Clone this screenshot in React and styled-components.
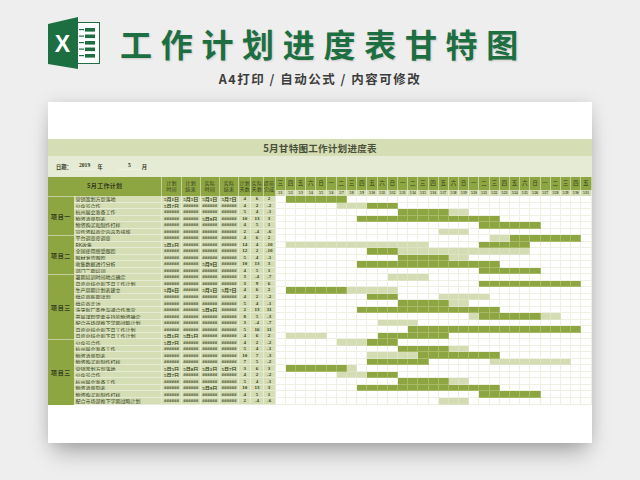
import React from 'react';
import styled, { createGlobalStyle } from 'styled-components';

const GlobalStyle = createGlobalStyle`
  html, body {
    margin: 0;
    padding: 0;
    background: #eeeeee;
  }
`;

const Page = styled.div`
  width: 640px;
  height: 480px;
  overflow: hidden;
  background: #eeeeee;
  font-family: "Liberation Sans", "Noto Sans CJK SC", sans-serif;
`;

const Header = styled.header`
  display: flex;
  align-items: center;
  height: 52px;
  padding: 17px 0 0 48px;
`;

const Title = styled.h1`
  margin: 0 0 0 20px;
  font-family: "Noto Sans CJK SC", sans-serif;
  font-size: 32px;
  line-height: 40px;
  font-weight: 700;
  letter-spacing: 8.7px;
  white-space: nowrap;
  color: #1d6f42;
  text-shadow: 1px 1px 2px rgba(0, 0, 0, 0.15);
`;

const Subtitle = styled.div`
  margin-top: 2px;
  height: 16px;
  line-height: 16px;
  text-align: center;
  font-family: "Noto Sans CJK SC", sans-serif;
  font-size: 12.5px;
  font-weight: 700;
  letter-spacing: 1.5px;
  color: #3d3d3d;
`;

const Card = styled.main`
  margin: 15px 48px 0;
  height: 341px;
  padding-top: 37px;
  box-sizing: border-box;
  background: #fff;
  box-shadow: 0 14px 22px -6px rgba(0, 0, 0, 0.3), 0 0 14px rgba(0, 0, 0, 0.1);
`;

const SheetTitle = styled.div`
  height: 17px;
  line-height: 18px;
  text-align: center;
  background: #d5ddb5;
  font-family: "Noto Sans CJK SC", sans-serif;
  font-size: 9.6px;
  font-weight: 700;
  letter-spacing: 0.2px;
  color: #4b5038;
`;

const DateBar = styled.div`
  display: flex;
  align-items: center;
  height: 20.5px;
  padding-left: 8px;
  box-sizing: border-box;
  background: #e6ebd6;
  font-family: "Noto Sans CJK SC", serif;
  font-size: 5.2px;
  font-weight: 700;
  color: #2f3520;
`;

const DateValue = styled.span`
  width: ${(props) => props.$w}px;
  margin-left: ${(props) => props.$ml}px;
  padding-bottom: 1px;
  text-align: center;
  border-bottom: 1px solid #eef1e2;
  font-family: "Liberation Serif", "Noto Sans CJK SC", serif;
  font-size: 5.6px;
`;

const DateUnit = styled.span`
  margin-left: 1px;
`;

const Sheet = styled.div`
  display: grid;
  grid-template-columns: 26px 88.4px repeat(4, 19.2px) repeat(3, 12.2px) repeat(31, 10.2px);
  grid-template-rows: 13.5px 6px repeat(32, 6.53px);
  font-family: "Liberation Serif", "Noto Sans CJK SC", serif;
  font-weight: 700;
  color: #353d20;
`;

const Cell = styled.div`
  display: flex;
  align-items: center;
  justify-content: center;
  min-width: 0;
  min-height: 0;
  overflow: hidden;
  box-sizing: border-box;
  white-space: nowrap;
`;

const HeadCell = styled(Cell)`
  grid-row: span 2;
  grid-column: span ${(props) => props.$cols || 1};
  background: #8ea642;
  border-right: 1px solid #c3d09a;
  font-family: "Noto Sans CJK SC", serif;
  font-size: ${(props) => props.$size || 5}px;
  font-weight: ${(props) => props.$weight || 400};
  line-height: 6.4px;
  text-align: center;
  letter-spacing: 0.3px;
`;

const WeekCell = styled(Cell)`
  background: #8ea642;
  border-right: 1px solid #c3d09a;
  font-family: "Noto Sans CJK SC", serif;
  font-size: 5.6px;
  font-weight: 400;
`;

const DayCell = styled(Cell)`
  background: #d5ddb5;
  border-right: 1px solid #e6ebd6;
  font-size: 3.3px;
`;

const GroupCell = styled(Cell)`
  grid-row: span ${(props) => props.$rows};
  background: #8ea642;
  border-top: 1px solid #c3d09a;
  font-family: "Noto Sans CJK SC", serif;
  font-size: 6px;
  letter-spacing: 0.6px;
`;

const TaskCell = styled(Cell)`
  justify-content: flex-start;
  padding-left: 1.6px;
  background: #d4ddb4;
  border-right: 1px solid #e6ebd6;
  border-bottom: 1px solid #e6ebd6;
  font-family: "Noto Sans CJK SC", serif;
  font-size: 5px;
  font-weight: 400;
`;

const DataCell = styled(Cell)`
  background: #d4ddb4;
  border-right: 1px solid #e6ebd6;
  border-bottom: 1px solid #e6ebd6;
  font-size: 5px;
`;

const fills = { dark: '#8ea642', light: '#d3dcb2' };
const lines = { dark: '#a6ba68', light: '#dce3c3' };

const GanttCell = styled.div`
  box-sizing: border-box;
  min-height: 0;
  background: ${(props) => fills[props.$fill] || '#fff'};
  border-right: 1px solid ${(props) => lines[props.$fill] || '#eef1e2'};
  border-bottom: 1px solid ${(props) => lines[props.$fill] || '#eef1e2'};
`;

const ExcelIcon = () => (
  <svg width="52" height="52" viewBox="0 0 52 52">
    <rect x="29" y="5.5" width="22.5" height="41" fill="#fff" stroke="#1d6f42" strokeWidth="1" />
    {[11, 17.5, 24, 30.5, 37].map((y) => (
      <g key={y} fill="#1d6f42">
        <rect x="37" y={y} width="10" height="3.6" />
        <rect x="31" y={y + 1} width="5" height="1.2" />
      </g>
    ))}
    <polygon points="0,7 30,0 30,52 0,47" fill="#1d6f42" />
    <text x="14.5" y="34.7" textAnchor="middle" fontFamily="Liberation Sans" fontWeight="700" fontSize="23" fill="#fff">
      X
    </text>
  </svg>
);

const weekNames = ['三', '四', '五', '六', '日', '一', '二'];
const days = Array.from({ length: 31 }, (_, i) => i);

const groups = [
  { name: '项目一', rows: 6 },
  { name: '项目二', rows: 6 },
  { name: '项目三', rows: 10 },
  { name: '项目三', rows: 10 },
];

const a = '5月1日';
const b = '5月5日';
const c = '5月7日';
const d = '5月9日';
const e = '5月6日';
const f = '5月8日';
const x = '######';

// task, plan start/end, real start/end, plan days, real days, diff, bars
const rows = [
  ['营销策划方案落地', a, b, a, c, 4, 6, 2, [['dark', 1, 6]]],
  ['公众号合作', c, x, x, x, 4, 2, -2, [['light', 6, 8], ['dark', 9, 11]]],
  ['杭州展会准备工作', x, x, x, x, 5, 4, -1, [['dark', 12, 16], ['light', 17, 18]]],
  ['物资清单列表', x, x, d, x, 10, 13, 3, [['dark', 8, 21]]],
  ['物资购买和制作打样', x, x, x, x, 4, 5, 1, [['dark', 20, 25]]],
  ['宣传资料商定内容及排版', x, x, x, x, 2, -4, -6, [['light', 16, 18]]],
  ['平台调查度调查', x, x, x, x, 4, 6, 2, [['light', 21, 22], ['dark', 23, 29]]],
  ['RK收集', a, x, x, x, 14, 4, -10, [['light', 1, 14], ['dark', 20, 24]]],
  ['全国使用感受跟踪', x, x, x, x, 12, 2, -10, [['dark', 9, 11], ['light', 12, 24]]],
  ['眼材发货跟踪', x, x, x, x, 5, 4, -1, [['dark', 12, 16], ['light', 17, 18]]],
  ['收集数据进行分析', x, x, d, x, 10, 13, 3, [['dark', 8, 21]]],
  ['部门二期培训', x, x, x, x, 4, 5, 1, [['dark', 20, 25]]],
  ['暑期培训时间地点确定', x, x, x, x, 3, -4, -7, [['light', 11, 14]]],
  ['月度总结会和下月工作计划', x, x, x, x, 3, 9, 6, [['dark', 20, 29]]],
  ['生产周期计划表建立', e, x, a, c, 4, 6, 2, [['dark', 1, 6], ['light', 7, 11]]],
  ['供应商账期谈判', x, x, x, x, 4, 2, -2, [['dark', 9, 11], ['light', 16, 20]]],
  ['供应商走访', x, x, x, x, 5, 4, -1, [['dark', 12, 16], ['light', 17, 18]]],
  ['洗牙新厂条件沟通合作事宜', x, x, d, x, 2, 13, 11, [['dark', 8, 21]]],
  ['开展课程需要支持的物资确定', x, x, x, x, 8, 5, -3, [['light', 19, 19], ['dark', 20, 25], ['light', 26, 27]]],
  ['配合市场部推下学期战略计划', x, x, x, x, 3, -4, -7, [['light', 10, 13]]],
  ['月度总结会和下月工作计划', x, x, x, x, 5, 16, 11, [['dark', 13, 29]]],
  ['月度总结会和下月工作计划', a, b, x, x, 4, 6, 2, [['light', 1, 4], ['dark', 10, 16]]],
  ['公众号合作', c, x, x, x, 4, 2, -2, [['light', 6, 8], ['dark', 9, 11]]],
  ['杭州展会准备工作', x, x, x, x, 5, 4, -1, [['dark', 12, 16], ['light', 17, 18]]],
  ['物资清单列表', x, x, x, x, 10, 7, -3, [['light', 9, 13], ['dark', 14, 21]]],
  ['物资购买和制作打样', x, x, x, x, 7, 5, -2, [['dark', 9, 14], ['light', 21, 28]]],
  ['营销策划方案落地', b, f, a, c, 3, 6, 3, [['dark', 1, 6], ['light', 7, 7]]],
  ['公众号合作', c, x, x, x, 4, 2, -2, [['light', 6, 8], ['dark', 9, 11]]],
  ['杭州展会准备工作', x, x, x, x, 5, 4, -1, [['dark', 12, 16], ['light', 17, 18]]],
  ['物资清单列表', x, x, d, x, 10, 13, 3, [['dark', 8, 21]]],
  ['物资购买和制作打样', x, x, x, x, 4, 5, 1, [['dark', 20, 25]]],
  ['配合市场部推下学期战略计划', x, x, x, x, 2, -4, -6, [['light', 16, 18]]],
];

const fillAt = (bars, day) => {
  const bar = bars.find(([, from, to]) => day >= from && day <= to);
  return bar ? bar[0] : undefined;
};

const groupAt = (index) => {
  let start = 0;
  for (const group of groups) {
    if (index === start) return group;
    start += group.rows;
  }
  return null;
};

const App = () => (
  <Page>
    <GlobalStyle />
    <Header>
      <ExcelIcon />
      <Title>工作计划进度表甘特图</Title>
    </Header>
    <Subtitle>A4打印 / 自动公式 / 内容可修改</Subtitle>
    <Card>
      <SheetTitle>5月甘特图工作计划进度表</SheetTitle>
      <DateBar>
        日期：
        <DateValue $w={24} $ml={1}>2019</DateValue>
        <DateUnit>年</DateUnit>
        <DateValue $w={23} $ml={15}>5</DateValue>
        <DateUnit>月</DateUnit>
      </DateBar>
      <Sheet>
        <HeadCell $cols={2} $size={6} $weight={700}>5月工作计划</HeadCell>
        {['计划时间', '计划结束', '实际时间', '实际结束', '计划天数', '实际天数', '提前完成'].map((label) => (
          <HeadCell key={label}>
            {label.slice(0, 2)}
            <br />
            {label.slice(2)}
          </HeadCell>
        ))}
        {days.map((i) => (
          <WeekCell key={i}>{weekNames[i % 7]}</WeekCell>
        ))}
        {days.map((i) => (
          <DayCell key={i}>5/{i + 1}</DayCell>
        ))}
        {rows.map(([task, s1, e1, s2, e2, plan, real, diff, bars], index) => {
          const group = groupAt(index);
          return (
            <React.Fragment key={index}>
              {group && <GroupCell $rows={group.rows}>{group.name}</GroupCell>}
              <TaskCell>{task}</TaskCell>
              {[s1, e1, s2, e2, plan, real, diff].map((value, i) => (
                <DataCell key={i}>{value}</DataCell>
              ))}
              {days.map((i) => (
                <GanttCell key={i} $fill={fillAt(bars, i)} />
              ))}
            </React.Fragment>
          );
        })}
      </Sheet>
    </Card>
  </Page>
);

export default App;
